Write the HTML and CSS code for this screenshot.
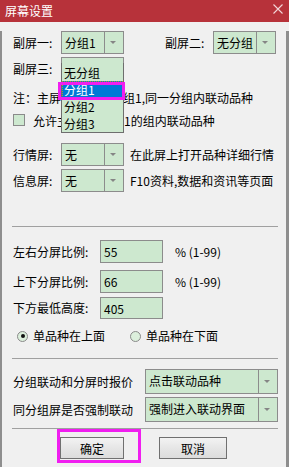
FILE: index.html
```html
<!DOCTYPE html>
<html lang="zh-CN">
<head>
    <meta charset="UTF-8" />
    <title>屏幕设置</title>
    <link rel="stylesheet" href="styles.css">
</head>
<body>
<div class="window">
    <header class="titlebar">
        <span class="title">屏幕设置</span>
        <svg class="close" width="10" height="10" viewBox="0 0 10 10">
            <path d="M0.5 0.5 L9.5 9.5 M9.5 0.5 L0.5 9.5" stroke="#f2d6d8" stroke-width="1.1" fill="none"/>
        </svg>
    </header>

    <main class="content">
        <!-- Sous-écrans -->
        <div class="row row-first">
            <span class="label lbl-48">副屏一:</span>
            <div class="combo">
                <span class="val">分组1</span><span class="arrow"></span>
            </div>
            <span class="label lbl-48 gap-41">副屏二:</span>
            <div class="combo">
                <span class="val">无分组</span><span class="arrow"></span>
            </div>
        </div>
        <div class="row row-3">
            <span class="label lbl-48">副屏三:</span>
            <div class="combo combo-hidden"></div>
        </div>

        <!-- texte partiellement caché par la liste ouverte -->
        <p class="note"><span class="note-a">注：主屏</span><span>组1,同一分组内联动品种</span></p>
        <div class="check-row">
            <span class="checkbox"></span>
            <span class="check-a">允许主</span><span>1的组内联动品种</span>
        </div>

        <div class="row row-15">
            <span class="label lbl-48">行情屏:</span>
            <div class="combo">
                <span class="val">无</span><span class="arrow"></span>
            </div>
            <span class="hint">在此屏上打开品种详细行情</span>
        </div>
        <div class="row row-3">
            <span class="label lbl-48">信息屏:</span>
            <div class="combo">
                <span class="val">无</span><span class="arrow"></span>
            </div>
            <span class="hint">F10资料,数据和资讯等页面</span>
        </div>

        <hr class="sep sep-big">

        <!-- Proportions -->
        <div class="row row-13">
            <span class="label lbl-87">左右分屏比例:</span>
            <div class="edit">55</div>
            <span class="pct">% (1-99)</span>
        </div>
        <div class="row row-7">
            <span class="label lbl-87">上下分屏比例:</span>
            <div class="edit">66</div>
            <span class="pct">% (1-99)</span>
        </div>
        <div class="row row-4 row-22">
            <span class="label lbl-87">下方最低高度:</span>
            <div class="edit">405</div>
        </div>
        <div class="radio-row">
            <span class="radio checked"></span>
            <span class="radio-text">单品种在上面</span>
            <span class="radio radio-2"></span>
            <span class="radio-text">单品种在下面</span>
        </div>

        <hr class="sep sep-14">

        <div class="row row-10 row-24">
            <span class="label lbl-132">分组联动和分屏时报价</span>
            <div class="combo combo-wide">
                <span class="val">点击联动品种</span><span class="arrow"></span>
            </div>
        </div>
        <div class="row row-3 row-24">
            <span class="label lbl-132">同分组屏是否强制联动</span>
            <div class="combo combo-wide">
                <span class="val">强制进入联动界面</span><span class="arrow"></span>
            </div>
        </div>

        <hr class="sep sep-6">

        <div class="buttons">
            <button class="btn btn-ok">确定</button>
            <button class="btn btn-cancel">取消</button>
            <span class="mark mark-ok"></span>
        </div>

        <!-- Liste déroulante ouverte -->
        <ul class="dropdown">
            <li>无分组</li>
            <li class="selected">分组1</li>
            <li>分组2</li>
            <li>分组3</li>
        </ul>
        <span class="mark mark-item"></span>
    </main>
</div>
</body>
</html>
```

FILE: styles.css
```css
/* Base */
* {
    box-sizing: border-box;
    margin: 0;
    padding: 0;
}

body {
    font-family: "Noto Sans CJK SC", "Microsoft YaHei", sans-serif;
    font-size: 12px;
    color: #000;
    background: #f0f0f0;
}

.window {
    width: 289px;
    height: 467px;
    background: #f0f0f0;
}

/* Barre de titre */
.titlebar {
    height: 22px;
    background: #b7323a;
    display: flex;
    align-items: center;
    justify-content: space-between;
    padding: 0 6px 0 5px;
}

.title {
    color: #fff;
    font-size: 12px;
    line-height: 16px;
}

.close {
    margin-top: -4px;
}

/* Zone principale */
.content {
    position: relative;
    height: 445px;
    border: solid #8e8e8e;
    border-width: 0 3px 3px 2px;
    padding-left: 11px;
}

.row {
    display: flex;
    align-items: center;
    height: 23px;
}
.row-first { margin-top: 9px; }
.row-3 { margin-top: 3px; }
.row-4 { margin-top: 4px; }
.row-7 { margin-top: 7px; }
.row-10 { margin-top: 10px; }
.row-13 { margin-top: 13px; }
.row-15 { margin-top: 15px; }
.row-22 { height: 22px; }
.row-24 { height: 25px; }

.label {
    flex: 0 0 auto;
    line-height: 16px;
    white-space: nowrap;
}
.lbl-48 { width: 48px; }
.lbl-87 { width: 87px; }
.lbl-132 { width: 132px; }
.gap-41 { margin-left: 41px; }

/* Combo */
.combo {
    display: flex;
    width: 63px;
    height: 100%;
    border: 1px solid #8c8c8c;
    background: #cde8cf;
}
.combo .val {
    flex: 1;
    padding-left: 3px;
    line-height: 21px;
    white-space: nowrap;
    overflow: hidden;
}
.combo .arrow {
    flex: 0 0 19px;
    border-left: 1px solid #8c8c8c;
    position: relative;
}
.combo .arrow::after {
    content: "";
    position: absolute;
    left: 5px;
    top: 9px;
    border-left: 3.5px solid transparent;
    border-right: 3.5px solid transparent;
    border-top: 3px solid #858585;
}
.combo-wide {
    width: 133px;
}
.combo-wide .arrow::after {
    top: 10px;
}

.hint {
    margin-left: 6px;
    white-space: nowrap;
    line-height: 16px;
}

.note {
    display: flex;
    margin-top: 10px;
    line-height: 16px;
    white-space: nowrap;
}
.note-a {
    flex: 0 0 110px;
}

.check-row {
    display: flex;
    align-items: center;
    margin-top: 6px;
    height: 16px;
    white-space: nowrap;
}
.checkbox {
    width: 12px;
    height: 12px;
    margin-right: 8px;
    border: 1px solid #8a8a8a;
    background: #cde8cf;
}
/* coupé au bord de la liste ouverte */
.check-a {
    flex: 0 0 29px;
    overflow: hidden;
    margin-right: 62px;
}

/* Séparateurs */
.sep {
    border: none;
    border-top: 1px solid #a0a0a0;
    width: 266px;
    margin-left: -1px;
}
.sep-big { margin-top: 34px; }
.sep-14 { margin-top: 14px; }
.sep-6 { margin-top: 6px; }

/* Champs d'édition */
.edit {
    width: 63px;
    height: 100%;
    border: 1px solid #8c8c8c;
    background: #cde8cf;
    padding-left: 3px;
    line-height: 21px;
}
.pct {
    margin-left: 12px;
    line-height: 16px;
}

/* Boutons radio */
.radio-row {
    display: flex;
    align-items: center;
    height: 16px;
    margin-top: 9px;
}
.radio {
    width: 11px;
    height: 11px;
    margin-left: 4px;
    border-radius: 50%;
    border: 1px solid #8a8a8a;
    background: #dcefdc;
    position: relative;
}
.radio.checked::after {
    content: "";
    position: absolute;
    left: 2.5px;
    top: 2.5px;
    width: 4px;
    height: 4px;
    border-radius: 50%;
    background: #111;
}
.radio-2 {
    margin-left: 25px;
}
.radio-text {
    margin-left: 5px;
    line-height: 16px;
    white-space: nowrap;
}

/* Boutons */
.buttons {
    position: relative;
    display: flex;
    margin-top: 8px;
    height: 22px;
}
.btn {
    font-family: inherit;
    font-size: 12px;
    height: 22px;
    border: 1px solid #707070;
    background: linear-gradient(#f3f3f3, #e6e6e6 50%, #dcdcdc);
    color: #000;
}
.btn-ok {
    width: 64px;
    margin-left: 47px;
}
.btn-cancel {
    width: 68px;
    margin-left: 35px;
}

/* Cadres de repère magenta */
.mark {
    position: absolute;
    border: 3px solid #f01ef0;
    pointer-events: none;
}
.mark-ok {
    left: 44px;
    top: -8px;
    width: 84px;
    height: 34px;
}
.mark-item {
    left: 56px;
    top: 51px;
    width: 67px;
    height: 18px;
}

/* Liste déroulante */
.dropdown {
    position: absolute;
    left: 59px;
    top: 32px;
    width: 63px;
    height: 70px;
    list-style: none;
    border: 1px solid #6e6e6e;
    border-top: none;
    background: #cde8cf;
    padding-top: 1px;
}
.dropdown li {
    height: 17px;
    line-height: 17px;
    padding-left: 2px;
    white-space: nowrap;
}
.dropdown li.selected {
    background: #0078d7;
    color: #fff;
    outline: 1px dotted #c08a30;
    outline-offset: -1px;
}
```
